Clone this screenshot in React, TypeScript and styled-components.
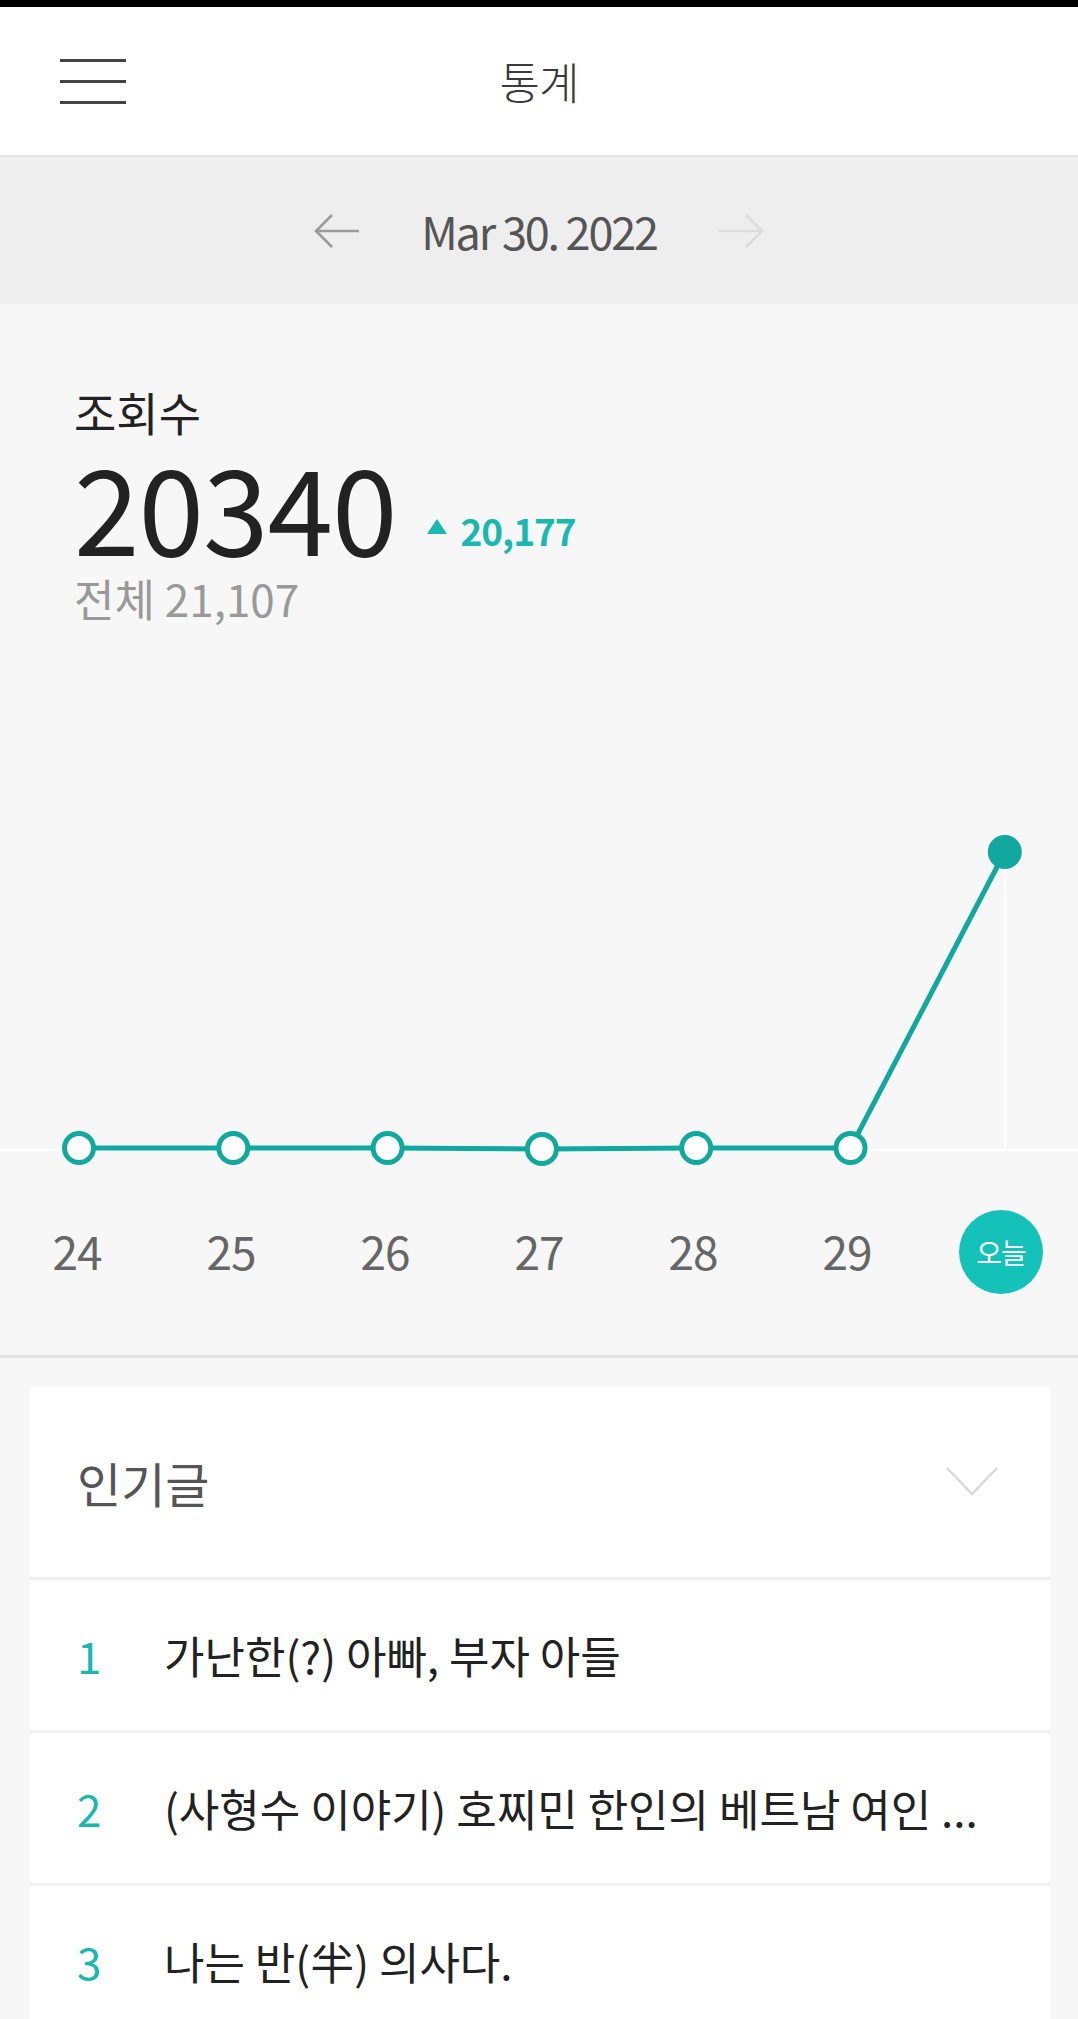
import React from "react";
import styled, { createGlobalStyle } from "styled-components";

const GlobalStyle = createGlobalStyle`
  html, body { margin: 0; padding: 0; background: #f7f7f7; }
  body { font-family: "Noto Sans CJK KR", "Noto Sans", sans-serif; }
  * { box-sizing: border-box; }
`;

const TEAL = "#10a89f";
const TEAL_LIGHT = "#14c2b9";
const TEAL_TEXT = "#1ab8b0";

const Page = styled.div`
  width: 1078px;
  min-height: 2019px;
  background: #f7f7f7;
  overflow: hidden;
`;

const StatusBar = styled.div`
  height: 7px;
  background: #000;
`;

const Header = styled.header`
  height: 150px;
  background: #fff;
  border-bottom: 2px solid #e4e4e4;
  display: grid;
  grid-template-columns: 1fr auto 1fr;
  align-items: center;
`;

const MenuButton = styled.button`
  justify-self: start;
  margin-left: 60px;
  width: 66px;
  height: 45px;
  padding: 0;
  border: 0;
  background: transparent;
  display: flex;
  flex-direction: column;
  justify-content: space-between;
`;

const MenuLine = styled.span`
  display: block;
  height: 3px;
  width: 100%;
  background: #444;
`;

const Title = styled.h1`
  margin: 0;
  font-size: 44px;
  font-weight: 300;
  color: #3a3a3a;
  letter-spacing: -1px;
`;

const DateBar = styled.div`
  height: 147px;
  background: #eeeeee;
  display: flex;
  align-items: center;
  justify-content: center;
  gap: 60px;
`;

const ArrowButton = styled.button<{ $dim?: boolean }>`
  padding: 0;
  border: 0;
  background: transparent;
  display: flex;
  color: ${(p) => (p.$dim ? "#dcdcdc" : "#9a9a9a")};
`;

const DateText = styled.span`
  font-size: 45px;
  line-height: 1;
  color: #555;
  letter-spacing: -2.2px;
`;

const StatsSection = styled.section`
  background: #f7f7f7;
  border-bottom: 3px solid #e2e2e2;
`;

const Summary = styled.div`
  padding: 79px 0 0 74px;
`;

const Label = styled.div`
  font-size: 46px;
  line-height: 56px;
  color: #222;
`;

const ValueRow = styled.div`
  display: flex;
  align-items: flex-end;
  gap: 31px;
  margin-top: 21px;
`;

const BigNumber = styled.div`
  font-size: 118px;
  line-height: 90px;
  color: #222;
  letter-spacing: -1px;
`;

const Delta = styled.div`
  display: flex;
  align-items: center;
  gap: 13px;
  font-size: 37px;
  line-height: 40px;
  font-weight: 700;
  color: ${TEAL_TEXT};
  letter-spacing: -1px;
`;

const Triangle = styled.span`
  width: 0;
  height: 0;
  margin-bottom: 7px;
  border-left: 10px solid transparent;
  border-right: 10px solid transparent;
  border-bottom: 15px solid ${TEAL_TEXT};
`;

const Total = styled.div`
  margin-top: 20px;
  font-size: 44px;
  line-height: 56px;
  color: #999;
`;

const ChartSvg = styled.svg`
  display: block;
  width: 1078px;
  height: 380px;
  margin-top: 174px;
`;

const LabelsRow = styled.div`
  display: grid;
  grid-template-columns: repeat(7, 1fr);
  height: 84px;
  margin: 30px 0 61px;
  align-items: center;
  justify-items: center;
`;

const DayLabel = styled.span`
  margin-bottom: 5px;
  font-size: 46px;
  color: #666;
  letter-spacing: -1px;
`;

const TodayBadge = styled.span`
  width: 84px;
  height: 84px;
  border-radius: 50%;
  background: ${TEAL_LIGHT};
  color: #fff;
  font-size: 28px;
  display: flex;
  align-items: center;
  justify-content: center;
  letter-spacing: -1px;
`;

const Card = styled.section`
  margin: 29px 28px 0 30px;
  background: #fff;
`;

const CardHeader = styled.div`
  height: 193px;
  border-bottom: 3px solid #f0f0f0;
  display: flex;
  align-items: center;
  justify-content: space-between;
  padding: 0 52px 0 47px;
`;

const CardTitle = styled.h2`
  margin: 0;
  font-size: 48px;
  font-weight: 400;
  color: #555;
`;

const Row = styled.div`
  height: 153px;
  border-bottom: 3px solid #f0f0f0;
  display: flex;
  align-items: center;
  padding-left: 47px;
`;

const RowNum = styled.span`
  width: 87px;
  flex: none;
  font-size: 44px;
  color: ${TEAL_TEXT};
`;

const RowTitle = styled.span`
  font-size: 44px;
  color: #222;
  white-space: nowrap;
`;

const days = ["24", "25", "26", "27", "28", "29"];
const values = [0, 0, 0, 1, 0, 0];

const ArrowLeft = () => (
  <svg width="48" height="38" viewBox="0 0 48 38" fill="none">
    <path d="M46 19H3M19 3L3 19L19 35" stroke="currentColor" strokeWidth="2.5" />
  </svg>
);

const ArrowRight = () => (
  <svg width="48" height="38" viewBox="0 0 48 38" fill="none">
    <path d="M2 19H45M29 3L45 19L29 35" stroke="currentColor" strokeWidth="2.5" />
  </svg>
);

const Chevron = () => (
  <svg width="52" height="30" viewBox="0 0 52 30" fill="none">
    <path d="M1 1L26 27L51 1" stroke="#d8d8d8" strokeWidth="2.5" />
  </svg>
);

const posts = [
  "가난한(?) 아빠, 부자 아들",
  "(사형수 이야기) 호찌민 한인의 베트남 여인 ...",
  "나는 반(半) 의사다.",
];

export default function App() {
  const xs = Array.from({ length: 7 }, (_, i) => 79 + i * 154.3);
  const baseY = 348;
  const pts = xs.map((x, i) => ({ x, y: i < 6 ? baseY + values[i] : 52 }));
  const linePath = pts.map((p, i) => `${i ? "L" : "M"}${p.x} ${p.y}`).join(" ");
  return (
    <Page>
      <GlobalStyle />
      <StatusBar />
      <Header>
        <MenuButton aria-label="menu">
          <MenuLine />
          <MenuLine />
          <MenuLine />
        </MenuButton>
        <Title>통계</Title>
        <span />
      </Header>
      <DateBar>
        <ArrowButton aria-label="prev">
          <ArrowLeft />
        </ArrowButton>
        <DateText>Mar 30. 2022</DateText>
        <ArrowButton $dim aria-label="next">
          <ArrowRight />
        </ArrowButton>
      </DateBar>
      <StatsSection>
        <Summary>
          <Label>조회수</Label>
          <ValueRow>
            <BigNumber>20340</BigNumber>
            <Delta>
              <Triangle />
              20,177
            </Delta>
          </ValueRow>
          <Total>전체 21,107</Total>
        </Summary>
        <ChartSvg viewBox="0 0 1078 380">
          <line x1="0" y1={baseY + 2} x2="1078" y2={baseY + 2} stroke="#fff" strokeWidth="2" />
          <line x1={xs[6]} y1={52} x2={xs[6]} y2={baseY + 2} stroke="#fff" strokeWidth="2" />
          <path d={linePath} stroke={TEAL} strokeWidth="5" fill="none" />
          {pts.slice(0, 6).map((p, i) => (
            <circle key={i} cx={p.x} cy={p.y} r="14.5" fill="#fff" stroke={TEAL} strokeWidth="5" />
          ))}
          <circle cx={pts[6].x} cy={pts[6].y} r="17" fill={TEAL} />
        </ChartSvg>
        <LabelsRow>
          {days.map((d) => (
            <DayLabel key={d}>{d}</DayLabel>
          ))}
          <TodayBadge>오늘</TodayBadge>
        </LabelsRow>
      </StatsSection>
      <Card>
        <CardHeader>
          <CardTitle>인기글</CardTitle>
          <Chevron />
        </CardHeader>
        {posts.map((t, i) => (
          <Row key={i}>
            <RowNum>{i + 1}</RowNum>
            <RowTitle>{t}</RowTitle>
          </Row>
        ))}
      </Card>
    </Page>
  );
}
